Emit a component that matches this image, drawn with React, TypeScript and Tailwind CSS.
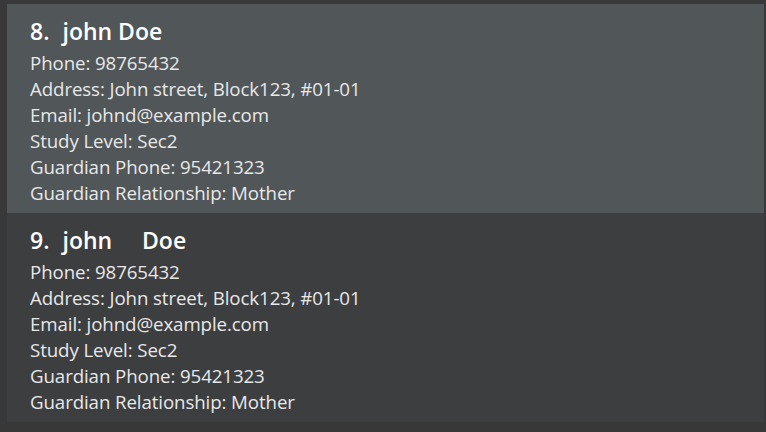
const people = [
  { index: 8, name: "john Doe", bg: "bg-[#515658]" },
  { index: 9, name: "john     Doe", bg: "bg-[#3c3e40]" },
]

const details = [
  "Phone: 98765432",
  "Address: John street, Block123, #01-01",
  "Email: johnd@example.com",
  "Study Level: Sec2",
  "Guardian Phone: 95421323",
  "Guardian Relationship: Mother",
]

export default function App() {
  return (
    <div className="w-[766px] h-[432px] bg-[#383838] pt-[4px] pl-[7px] pr-[2px] overflow-hidden font-['Open_Sans',sans-serif]">
      {people.map((p) => (
        <div key={p.index} className={`${p.bg} h-[209px] pl-[23px] pt-[12px]`}>
          <div className="flex text-[23px] font-semibold text-white leading-[30px] whitespace-pre">
            <span>{p.index}.</span>
            <span className="ml-[13px]">{p.name}</span>
          </div>
          <div className="mt-[4px] text-[18.7px] text-[#e8e8e8] leading-[26px] tracking-[-0.1px]">
            {details.map((d, i) => (
              <div key={i}>{d}</div>
            ))}
          </div>
        </div>
      ))}
    </div>
  )
}
